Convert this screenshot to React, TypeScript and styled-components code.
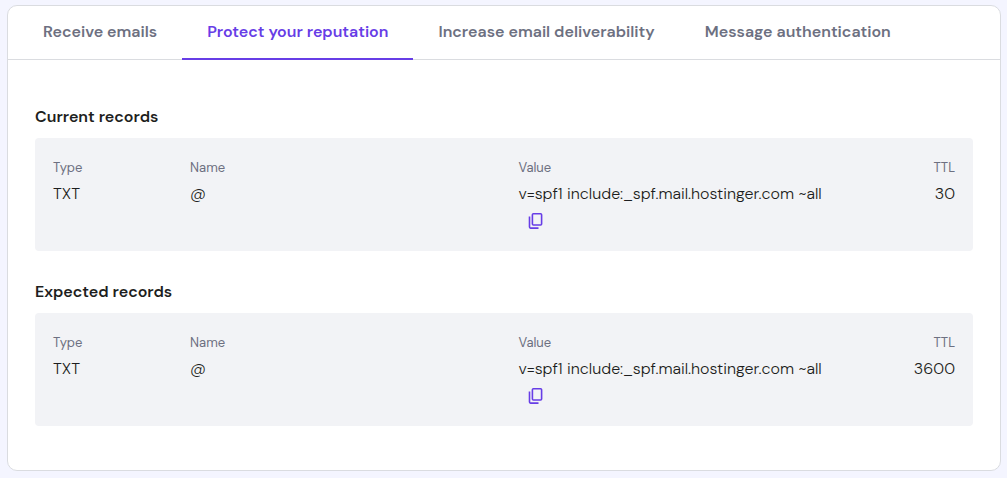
import React, { useState } from "react";
import styled, { createGlobalStyle } from "styled-components";

const GlobalStyle = createGlobalStyle`
  *, *::before, *::after { box-sizing: border-box; }
  body {
    margin: 0;
    background: #f4f5ff;
    color: #1d1e20;
    font-family: "DM Sans", Inter, "Liberation Sans", sans-serif;
    font-size: 16px;
    line-height: 22px;
  }
`;

const Page = styled.main`
  padding: 5px 6px 6px 7px;
`;

const Card = styled.section`
  background: #ffffff;
  border: 1px solid #dadce0;
  border-radius: 10px;
`;

const TabList = styled.div`
  display: flex;
  padding: 0 10px;
  border-bottom: 1px solid #dadce0;
`;

const Tab = styled.button<{ $active: boolean }>`
  margin: 0 0 -1px;
  padding: 15px 25px;
  border: 0;
  border-bottom: 2px solid ${(p) => (p.$active ? "#673de6" : "transparent")};
  background: none;
  color: ${(p) => (p.$active ? "#673de6" : "#6d7081")};
  font: inherit;
  font-weight: 600;
  white-space: nowrap;
  cursor: pointer;
`;

const Panel = styled.div`
  display: flex;
  flex-direction: column;
  gap: 30px;
  padding: 46px 27px 44px;
`;

const Heading = styled.h2`
  margin: 0 0 10px;
  font-size: 16px;
  line-height: 22px;
  font-weight: 600;
`;

const RecordBox = styled.div`
  padding: 19px 18px 18px;
  border-radius: 4px;
  background: #f2f3f6;
`;

const Table = styled.table`
  width: 100%;
  table-layout: fixed;
  border-collapse: collapse;
`;

const HeadCell = styled.th<{ $width?: string; $end?: boolean }>`
  width: ${(p) => p.$width ?? "auto"};
  padding: 0 0 3px;
  color: #6d7081;
  font-size: 13px;
  line-height: 22px;
  font-weight: 400;
  text-align: ${(p) => (p.$end ? "right" : "left")};
`;

const Cell = styled.td<{ $end?: boolean }>`
  padding: 0;
  font-size: 16px;
  font-weight: 300;
  line-height: 24px;
  vertical-align: top;
  text-align: ${(p) => (p.$end ? "right" : "left")};
`;

const CopyButton = styled.button`
  display: block;
  margin: 4px 0 0 8px;
  padding: 1px;
  border: 0;
  background: none;
  color: #673de6;
  cursor: pointer;

  svg { display: block; }
`;

const CopyIcon = () => (
  <svg width="18" height="21" viewBox="0 0 18 21" fill="none" stroke="currentColor" strokeWidth="1.6" aria-hidden="true">
    <rect x="5.4" y="2.8" width="9.2" height="11.2" rx="1" />
    <path d="M2.5 5.6v10.5a1 1 0 0 0 1 1h8" />
  </svg>
);

const tabs = [
  "Receive emails",
  "Protect your reputation",
  "Increase email deliverability",
  "Message authentication",
];

const value = "v=spf1 include:_spf.mail.hostinger.com ~all";

const groups = [
  { title: "Current records", type: "TXT", name: "@", value, ttl: 30 },
  { title: "Expected records", type: "TXT", name: "@", value, ttl: 3600 },
];

export default function App() {
  const [active, setActive] = useState(1);
  return (
    <>
      <GlobalStyle />
      <Page>
        <Card>
          <TabList role="tablist">
            {tabs.map((label, i) => (
              <Tab
                key={label}
                type="button"
                role="tab"
                aria-selected={i === active}
                $active={i === active}
                onClick={() => setActive(i)}
              >
                {label}
              </Tab>
            ))}
          </TabList>
          <Panel role="tabpanel">
            {groups.map((g) => (
              <section key={g.title}>
                <Heading>{g.title}</Heading>
                <RecordBox>
                  <Table aria-label={g.title}>
                    <thead>
                      <tr>
                        <HeadCell scope="col" $width="15.2%">Type</HeadCell>
                        <HeadCell scope="col" $width="36.4%">Name</HeadCell>
                        <HeadCell scope="col" $width="36.4%">Value</HeadCell>
                        <HeadCell scope="col" $end>TTL</HeadCell>
                      </tr>
                    </thead>
                    <tbody>
                      <tr>
                        <Cell>{g.type}</Cell>
                        <Cell>{g.name}</Cell>
                        <Cell>
                          {g.value}
                          <CopyButton
                            type="button"
                            aria-label="Copy value"
                            onClick={() => navigator.clipboard?.writeText(g.value)}
                          >
                            <CopyIcon />
                          </CopyButton>
                        </Cell>
                        <Cell $end>{g.ttl}</Cell>
                      </tr>
                    </tbody>
                  </Table>
                </RecordBox>
              </section>
            ))}
          </Panel>
        </Card>
      </Page>
    </>
  );
}
